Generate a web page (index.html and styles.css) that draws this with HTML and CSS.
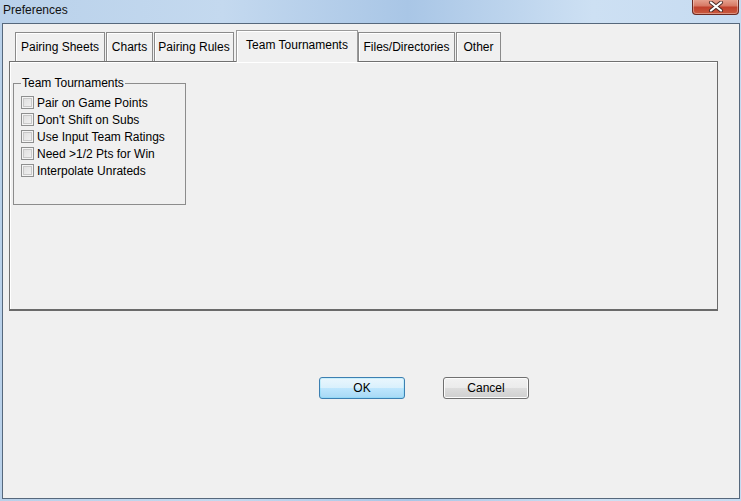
FILE: index.html
```html
<!DOCTYPE html>
<html>
<head>
<meta charset="utf-8">
<link rel="stylesheet" href="styles.css">
</head>
<body>
<div class="window">
  <div class="titlebar">
    <span class="title">Preferences</span>
    <div class="close">
      <svg width="16" height="11" viewBox="0 0 16 11">
        <path d="M3 1.5 L13 9.5 M13 1.5 L3 9.5" stroke="#4a2a26" stroke-width="4" stroke-linecap="round"/>
        <path d="M3 1.5 L13 9.5 M13 1.5 L3 9.5" stroke="#ffffff" stroke-width="2.2" stroke-linecap="round"/>
      </svg>
    </div>
  </div>
  <div class="client">
    <div class="tabs">
      <div class="tab tab-sheets">Pairing Sheets</div>
      <div class="tab tab-charts">Charts</div>
      <div class="tab tab-rules">Pairing Rules</div>
      <div class="tab tab-team active">Team Tournaments</div>
      <div class="tab tab-files">Files/Directories</div>
      <div class="tab tab-other">Other</div>
    </div>
    <div class="panel">
      <fieldset class="group">
        <legend>Team Tournaments</legend>
        <label class="check"><span class="box"></span>Pair on Game Points</label>
        <label class="check"><span class="box"></span>Don't Shift on Subs</label>
        <label class="check"><span class="box"></span>Use Input Team Ratings</label>
        <label class="check"><span class="box"></span>Need &gt;1/2 Pts for Win</label>
        <label class="check"><span class="box"></span>Interpolate Unrateds</label>
      </fieldset>
    </div>
    <div class="buttons">
      <div class="btn default">OK</div>
      <div class="btn">Cancel</div>
    </div>
  </div>
</div>
</body>
</html>
```
FILE: styles.css
```css
html, body {
  margin: 0;
  padding: 0;
}
body {
  width: 741px;
  height: 501px;
  overflow: hidden;
  font-family: "Liberation Sans", Arial, sans-serif;
  font-size: 12px;
  color: #000;
}
.window {
  width: 741px;
  height: 501px;
  box-sizing: border-box;
  display: flex;
  flex-direction: column;
  background: linear-gradient(90deg, #b9d1ea 0%, #c4d9ef 30%, #a9c6e6 55%, #cde0f3 80%, #c6dbf1 100%);
}
.titlebar {
  height: 23px;
  display: flex;
  align-items: flex-start;
  justify-content: space-between;
  padding-left: 3px;
  padding-right: 2px;
}
.title {
  font-family: "Liberation Sans", Arial, sans-serif;
  font-size: 12px;
  line-height: 20px;
  color: #111;
}
.close {
  width: 45px;
  height: 15px;
  margin-top: -1px;
  border: 1px solid #6b2a22;
  border-top: none;
  border-radius: 0 0 4px 4px;
  background: linear-gradient(180deg, #e8a795 0%, #d77a66 45%, #c1412d 55%, #c95a3e 100%);
  box-shadow: inset 0 0 0 1px rgba(255,255,255,0.35);
  display: flex;
  align-items: center;
  justify-content: center;
}
.client {
  flex: 1;
  margin: 0 1px 2px 2px;
  border: 1px solid #56687c;
  background: #f0f0f0;
  display: flex;
  flex-direction: column;
}
.tabs {
  display: flex;
  align-items: flex-end;
  padding: 6px 0 0 12px;
  height: 37px;
  box-sizing: border-box;
  position: relative;
  z-index: 1;
}
.tab {
  height: 29px;
  box-sizing: border-box;
  border: 1px solid #8a8a8a;
  border-bottom: none;
  box-shadow: inset 1px 1px 0 #ffffff;
  margin-right: 1px;
  line-height: 28px;
  text-align: center;
  background: #f0f0f0;
  white-space: nowrap;
  flex: none;
}
.tab-sheets { width: 90px; }
.tab-charts { width: 47px; }
.tab-rules { width: 80px; }
.tab-team { width: 122px; }
.tab-files { width: 97px; }
.tab-other { width: 45px; }
.tab.active {
  height: 32px;
  margin-bottom: -1px;
  margin-left: 1px;
  margin-right: 0;
  line-height: 28px;
  background: #f0f0f0;
  border-color: #9a9a9a;
}
.panel {
  margin: 0 21px 0 6px;
  height: 250px;
  box-sizing: border-box;
  border: 1px solid #707070;
  border-right-color: #6a6a6a;
  border-bottom: 2px solid #6a6a6a;
  box-shadow: inset 1px 1px 0 #ffffff;
  padding: 14px 0 0 3px;
}
.group {
  margin: 0;
  width: 173px;
  height: 129px;
  box-sizing: border-box;
  border: 1px solid #8c8c8c;
  padding: 0 0 0 7px;
  display: flex;
  flex-direction: column;
}
.group legend {
  padding: 0 1px;
  line-height: 14px;
  color: #000;
}
.check {
  display: flex;
  align-items: center;
  height: 17px;
  white-space: nowrap;
}
.check:first-of-type {
  margin-top: 4px;
}
.box {
  width: 13px;
  height: 13px;
  box-sizing: border-box;
  border: 1px solid #8e8f8f;
  background: linear-gradient(135deg, #dcdcdc 0%, #f4f4f4 100%);
  box-shadow: inset 0 0 0 1px #f4f4f4, inset 0 0 0 2px #c8c8c8;
  margin-right: 3px;
  flex: none;
}
.buttons {
  display: flex;
  gap: 38px;
  padding: 66px 0 0 316px;
}
.btn {
  width: 86px;
  height: 22px;
  box-sizing: border-box;
  border: 1px solid #707070;
  border-radius: 3px;
  background: linear-gradient(180deg, #f2f2f2 0%, #ebebeb 50%, #dddddd 51%, #cfcfcf 100%);
  box-shadow: inset 0 0 0 1px #fcfcfc;
  text-align: center;
  line-height: 20px;
  font-size: 12px;
}
.btn.default {
  border-color: #3c7fb1;
  background: linear-gradient(180deg, #eaf6fd 0%, #d9f0fc 50%, #bee6fd 51%, #a7d9f5 100%);
  box-shadow: inset 0 0 0 1px #48d6fb33;
}
```
